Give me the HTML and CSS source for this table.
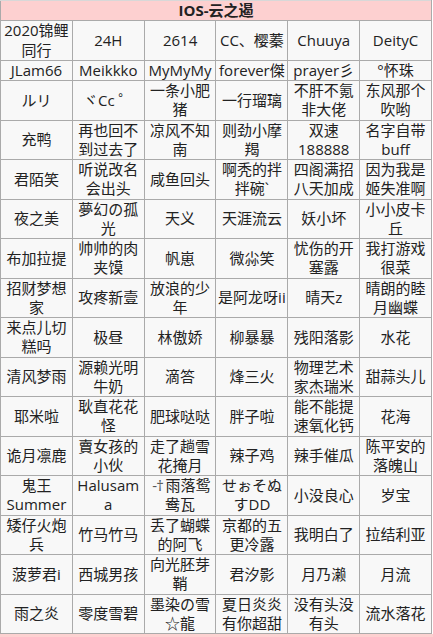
FILE: index.html
```html
<!DOCTYPE html>
<html lang="zh-CN">
<head>
<meta charset="utf-8">
<title>IOS-云之遏</title>
<link rel="stylesheet" href="styles.css">
</head>
<body>
<table class="list">
  <thead>
    <tr><th colspan="6" class="title">IOS-云之遏</th></tr>
  </thead>
  <tbody>
    <tr><td>2020锦鲤同行</td><td>24H</td><td>2614</td><td>CC、樱蓁</td><td>Chuuya</td><td>DeityC</td></tr>
    <tr><td>JLam66</td><td>Meikkko</td><td>MyMyMy</td><td>forever傑</td><td>prayer彡</td><td>°怀珠</td></tr>
    <tr><td>ルリ</td><td>ヾCc ゜</td><td>一条小肥猪</td><td>一行瑠璃</td><td>不肝不氪非大佬</td><td>东风那个吹哟</td></tr>
    <tr><td>充鸭</td><td>再也回不到过去了</td><td>凉风不知南</td><td>则劲小摩羯</td><td>双速188888</td><td>名字自带buff</td></tr>
    <tr><td>君陌笑</td><td>听说改名会出头</td><td>咸鱼回头</td><td>啊秃的拌拌碗`</td><td>四阁满招八天加成</td><td>因为我是姬失准啊</td></tr>
    <tr><td>夜之美</td><td>夢幻の孤光</td><td>天义</td><td>天涯流云</td><td>妖小坏</td><td>小小皮卡丘</td></tr>
    <tr><td>布加拉提</td><td>帅帅的肉夹馍</td><td>帆崽</td><td>微尛笑</td><td>忧伤的开塞露</td><td>我打游戏很菜</td></tr>
    <tr><td>招财梦想家</td><td>攻疼新壹</td><td>放浪的少年</td><td>是阿龙呀ii</td><td>晴天z</td><td>晴朗的睦月幽蝶</td></tr>
    <tr><td>来点儿切糕吗</td><td>极昼</td><td>林傲娇</td><td>柳暴暴</td><td>残阳落影</td><td>水花</td></tr>
    <tr><td>清风梦雨</td><td>源赖光明牛奶</td><td>滴答</td><td>烽三火</td><td>物理艺术家杰瑞米</td><td>甜蒜头儿</td></tr>
    <tr><td>耶米啦</td><td>耿直花花怪</td><td>肥球哒哒</td><td>胖子啦</td><td>能不能提速氧化钙</td><td>花海</td></tr>
    <tr><td>诡月凛鹿</td><td>賣女孩的小伙</td><td>走了趟雪花掩月</td><td>辣子鸡</td><td>辣手催瓜</td><td>陈平安的落魄山</td></tr>
    <tr><td>鬼王Summer</td><td>Halusam<br>a</td><td><span class="sym">-†</span>雨落鸳鸯瓦</td><td>せぉそぬすDD</td><td>小没良心</td><td>岁宝</td></tr>
    <tr><td>矮仔火炮兵</td><td>竹马竹马</td><td>丢了蝴蝶的阿飞</td><td>京都的五更冷露</td><td>我明白了</td><td>拉结利亚</td></tr>
    <tr><td>菠萝君i</td><td>西城男孩</td><td>向光胚芽鞘</td><td>君汐影</td><td>月乃濑</td><td>月流</td></tr>
    <tr><td>雨之炎</td><td>零度雪碧</td><td>墨染の雪☆龍</td><td>夏日炎炎有你超甜</td><td>没有头没有头</td><td>流水落花</td></tr>
  </tbody>
</table>
<div class="next"></div>
</body>
</html>
```

FILE: styles.css
```css
html, body {
  margin: 0;
  padding: 0;
  background: #ffffff;
}

body {
  font-family: "Open Sans", "Noto Sans CJK SC", sans-serif;
  font-size: 15px;
  color: #222222;
}

.list {
  width: 432px;
  border-collapse: collapse;
  table-layout: fixed;
  background: #f8f8f8;
}

.list th,
.list td {
  border: 1px solid #aaaaaa;
  padding: 0;
  line-height: 19.25px;
  text-align: center;
  vertical-align: middle;
  overflow-wrap: break-word;
}

.list .title {
  background: #fdd0d0;
  font-weight: bold;
  color: #222222;
  border-top-color: #d8d8d8;
}

.sym {
  display: inline-block;
  width: 16px;
  color: #555555;
  letter-spacing: -1px;
}

.next {
  height: 4px;
  background: #fdd0d0;
}
```
